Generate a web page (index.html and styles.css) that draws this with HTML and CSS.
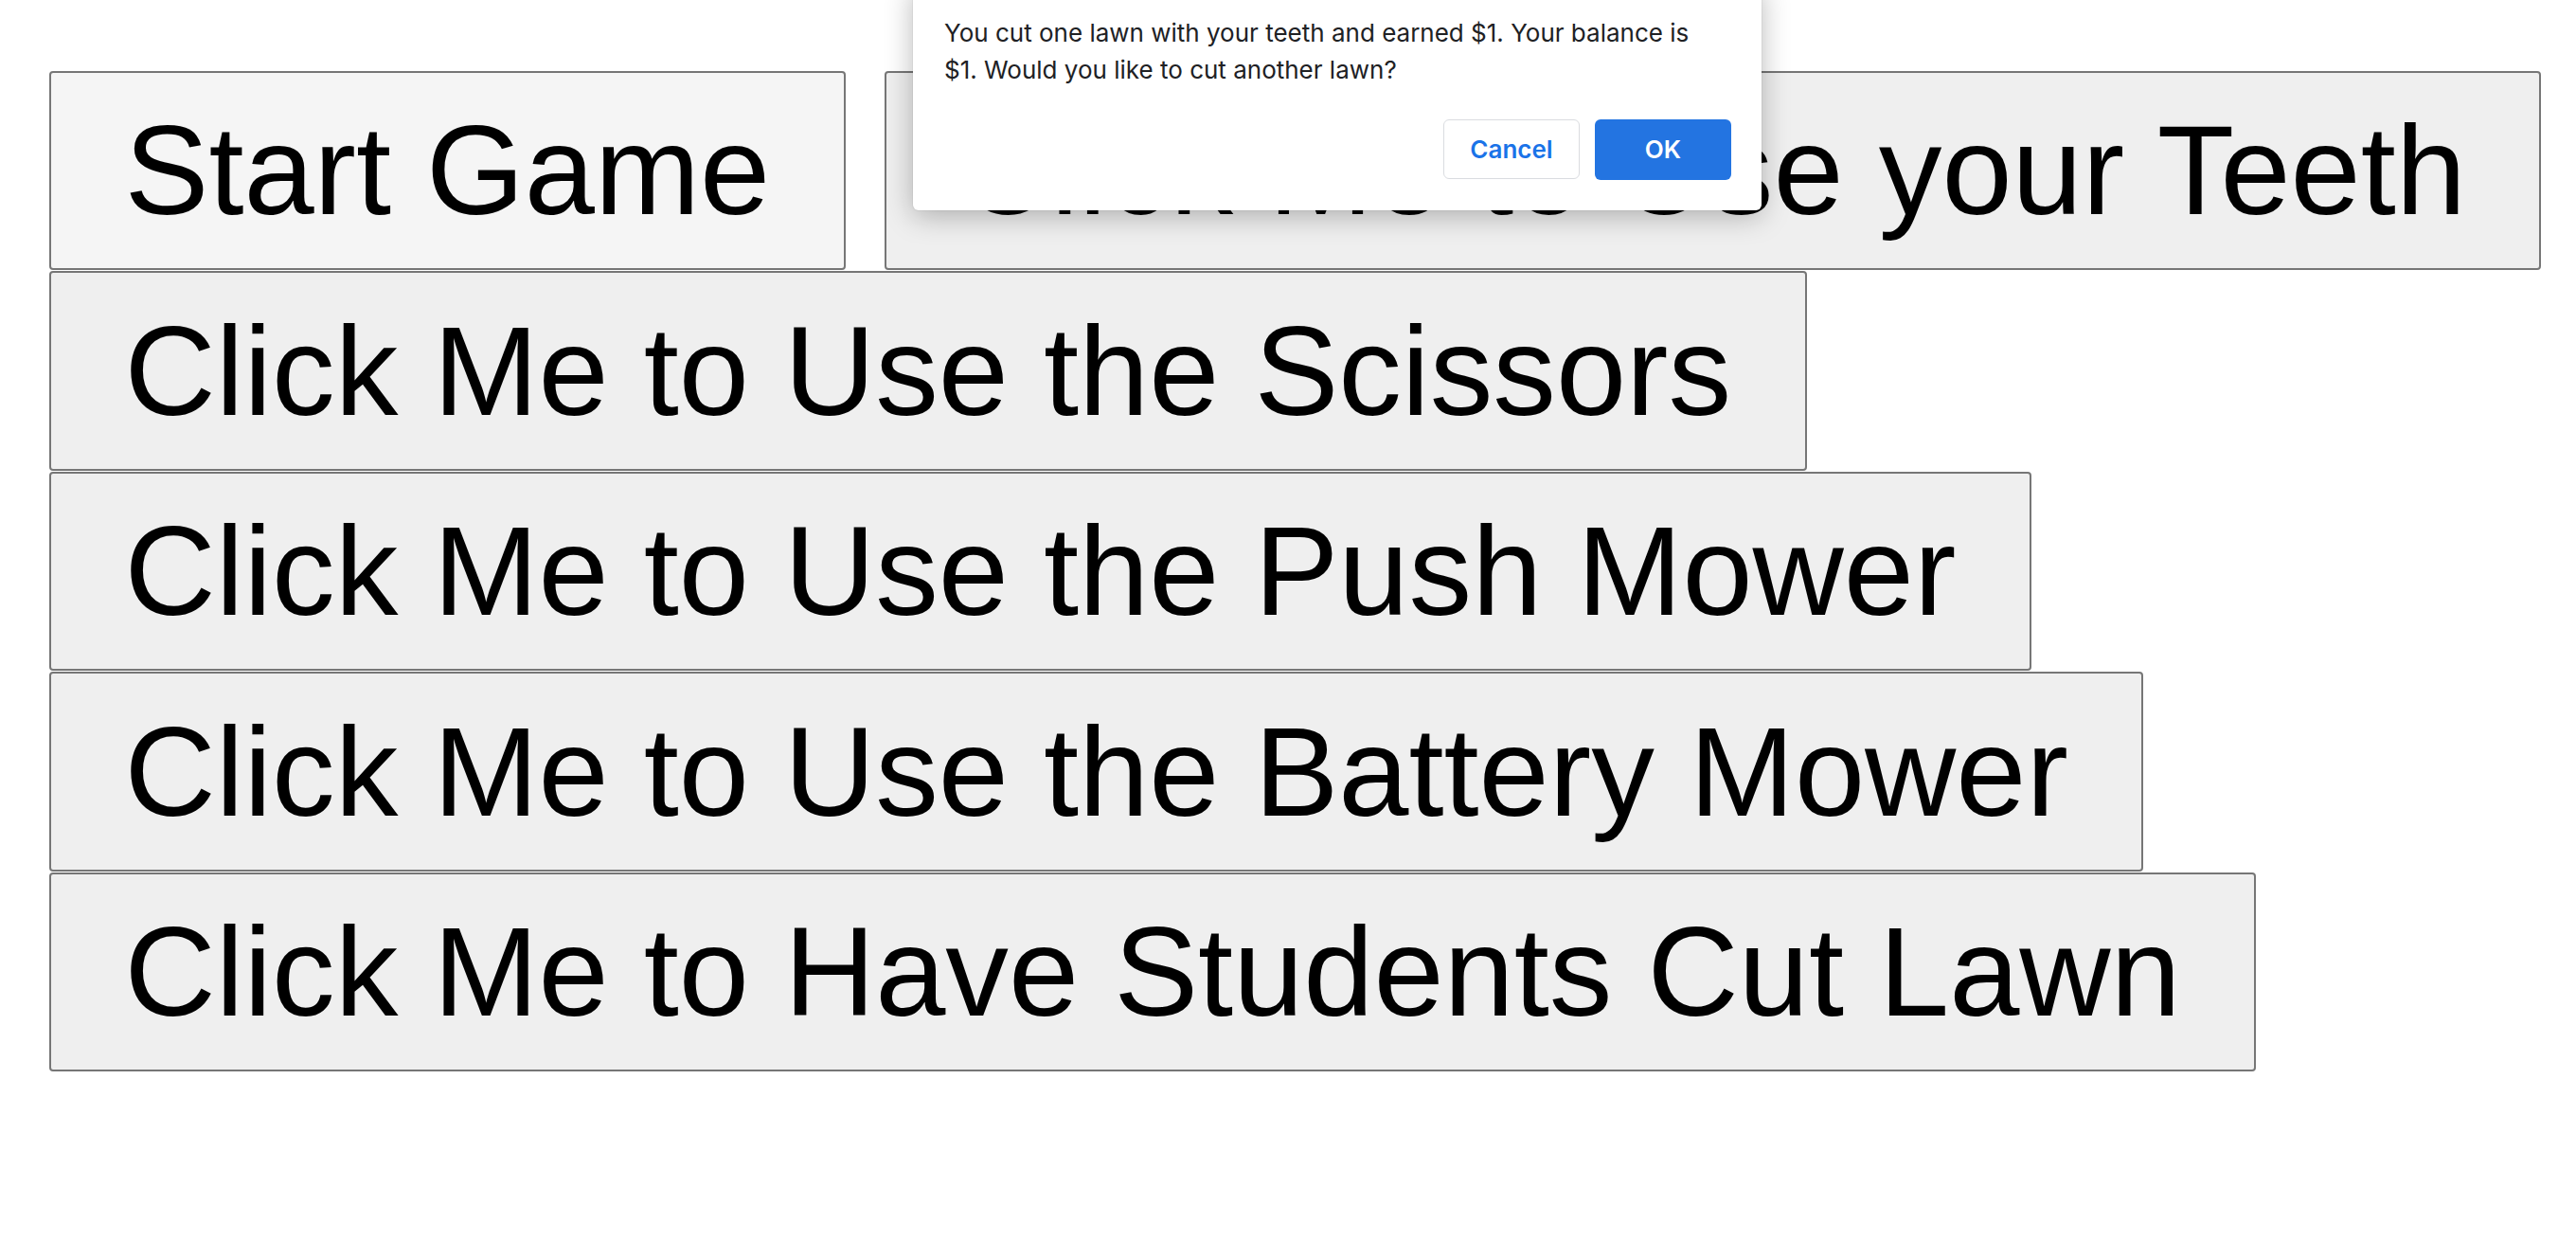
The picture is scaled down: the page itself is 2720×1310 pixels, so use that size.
FILE: index.html
```html
<!DOCTYPE html>
<html lang="en">
<head>
<meta charset="utf-8">
<title>Lawn Game</title>
<link rel="stylesheet" href="styles.css">
</head>
<body>
<main class="game">
  <div class="row-top">
    <button class="btn btn-start">Start Game</button>
    <button class="btn">Click Me to Use your Teeth</button>
  </div>
  <button class="btn">Click Me to Use the Scissors</button>
  <button class="btn">Click Me to Use the Push Mower</button>
  <button class="btn">Click Me to Use the Battery Mower</button>
  <button class="btn">Click Me to Have Students Cut Lawn</button>
</main>
<div class="dialog" role="dialog">
  <p class="dialog-msg">You cut one lawn with your teeth and earned $1. Your balance is<br>$1. Would you like to cut another lawn?</p>
  <div class="dialog-actions">
    <button class="dbtn dbtn-cancel">Cancel</button>
    <button class="dbtn dbtn-ok">OK</button>
  </div>
</div>
</body>
</html>
```
FILE: styles.css
```css
html, body {
  margin: 0;
  padding: 0;
  background: #ffffff;
}
body {
  position: relative;
  width: 2720px;
  height: 1310px;
  overflow: hidden;
}
.game {
  display: flex;
  flex-direction: column;
  align-items: flex-start;
  gap: 1px;
  padding: 74.5px 0 0 52px;
}
.row-top {
  display: flex;
  gap: 41px;
}
.btn {
  font-family: "Liberation Sans", Arial, sans-serif;
  font-size: 133.33px;
  line-height: 153px;
  padding: 26.75px 77.5px;
  border: 2px solid #767676;
  border-radius: 4px;
  background: #efefef;
  color: #000;
  white-space: nowrap;
  margin: 0;
}
.btn-start {
  background: #f5f5f5;
}
.dialog {
  position: absolute;
  left: 964px;
  top: -17px;
  width: 896px;
  box-sizing: border-box;
  padding: 32px 32px 32px 33px;
  background: #fff;
  border-radius: 0 0 6px 6px;
  box-shadow: 0 6px 30px rgba(0, 0, 0, 0.28), 0 0 0 1px rgba(0, 0, 0, 0.04);
  font-family: Inter, "Noto Sans", sans-serif;
}
.dialog-msg {
  margin: 0;
  font-size: 26px;
  line-height: 39px;
  color: #202124;
  white-space: nowrap;
}
.dialog-actions {
  display: flex;
  justify-content: flex-end;
  align-items: center;
  gap: 16px;
  margin-top: 32.5px;
}
.dbtn {
  width: 144px;
  height: 63px;
  border-radius: 6px;
  font-family: Inter, "Noto Sans", sans-serif;
  font-size: 26px;
  font-weight: 600;
  margin: 0;
  padding: 0;
}
.dbtn-cancel {
  background: #fff;
  border: 1px solid #dadce0;
  color: #1a73e8;
}
.dbtn-ok {
  background: #2374e1;
  border: none;
  color: #fff;
  height: 64px;
}
```
